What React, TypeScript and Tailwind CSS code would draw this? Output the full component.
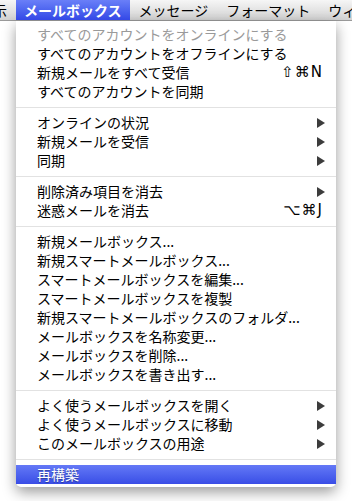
import React from 'react'

type Item =
  | { kind: 'sep' }
  | {
      kind: 'item'
      label: string
      shortcut?: string
      submenu?: boolean
      disabled?: boolean
      active?: boolean
    }

const ITEMS: Item[] = [
  { kind: 'item', label: 'すべてのアカウントをオンラインにする', disabled: true },
  { kind: 'item', label: 'すべてのアカウントをオフラインにする' },
  { kind: 'item', label: '新規メールをすべて受信', shortcut: '⇧⌘N' },
  { kind: 'item', label: 'すべてのアカウントを同期' },
  { kind: 'sep' },
  { kind: 'item', label: 'オンラインの状況', submenu: true },
  { kind: 'item', label: '新規メールを受信', submenu: true },
  { kind: 'item', label: '同期', submenu: true },
  { kind: 'sep' },
  { kind: 'item', label: '削除済み項目を消去', submenu: true },
  { kind: 'item', label: '迷惑メールを消去', shortcut: '⌥⌘J' },
  { kind: 'sep' },
  { kind: 'item', label: '新規メールボックス...' },
  { kind: 'item', label: '新規スマートメールボックス...' },
  { kind: 'item', label: 'スマートメールボックスを編集...' },
  { kind: 'item', label: 'スマートメールボックスを複製' },
  { kind: 'item', label: '新規スマートメールボックスのフォルダ...' },
  { kind: 'item', label: 'メールボックスを名称変更...' },
  { kind: 'item', label: 'メールボックスを削除...' },
  { kind: 'item', label: 'メールボックスを書き出す...' },
  { kind: 'sep' },
  { kind: 'item', label: 'よく使うメールボックスを開く', submenu: true },
  { kind: 'item', label: 'よく使うメールボックスに移動', submenu: true },
  { kind: 'item', label: 'このメールボックスの用途', submenu: true },
  { kind: 'sep' },
  { kind: 'item', label: '再構築', active: true },
]

const FONT = "font-['Hiragino_Kaku_Gothic_ProN','Noto_Sans_CJK_JP',sans-serif]"

/** サブメニューの▶ */
function SubmenuArrow() {
  return (
    <svg width="8" height="10" viewBox="0 0 8 10" className="flex-none">
      <polygon points="0,0 8,5 0,10" fill="#3c3c3c" />
    </svg>
  )
}

function MenuBar() {
  const tabs = ['表示', 'メールボックス', 'メッセージ', 'フォーマット', 'ウィンドウ']
  return (
    <div className="flex h-[21px] overflow-hidden whitespace-nowrap border-b border-[#9a9a9a] bg-gradient-to-b from-[#f6f6f6] to-[#d2d2d2]">
      {tabs.map((t, i) => (
        <div
          key={t}
          className={
            i === 0
              ? 'ml-[-30px] flex-none px-[9px] text-[14px] leading-[20px] text-black'
              : i === 1
                ? 'flex-none bg-gradient-to-b from-[#6a7ff8] to-[#3447e6] px-[8px] text-[14px] font-bold leading-[20px] text-white'
                : 'flex-none px-[9px] text-[14px] leading-[20px] text-black'
          }
        >
          {t}
        </div>
      ))}
    </div>
  )
}

export default function App() {
  return (
    <div className={`h-[501px] w-[352px] overflow-hidden bg-white ${FONT}`}>
      <MenuBar />
      <div className="ml-[16px] w-[320px] rounded-b-[5px] bg-white pb-[3px] pt-[4px] shadow-[0_5px_14px_rgba(0,0,0,0.4)]">
        {ITEMS.map((it, i) =>
          it.kind === 'sep' ? (
            <div key={i} className="flex h-[12px] items-center">
              <div className="h-px w-full bg-[#e2e2e2]" />
            </div>
          ) : (
            <div
              key={i}
              className={
                it.active
                  ? 'flex h-[19px] items-center justify-between bg-gradient-to-b from-[#6478f6] to-[#3a4de6] pl-[21px] pr-[11px] text-[14px] text-white [text-shadow:0_1px_1px_rgba(0,0,0,0.35)]'
                  : it.disabled
                    ? 'flex h-[19px] items-center justify-between pl-[21px] pr-[11px] text-[14px] text-[#9a9a9a]'
                    : 'flex h-[19px] items-center justify-between pl-[21px] pr-[11px] text-[14px] text-black'
              }
            >
              <span className="whitespace-nowrap">{it.label}</span>
              {it.shortcut && (
                <span className="pr-[2px] font-['DejaVu_Sans','Noto_Sans_CJK_JP',sans-serif] text-[15px] font-medium leading-[19px] tracking-[1px]">
                  {it.shortcut}
                </span>
              )}
              {it.submenu && <SubmenuArrow />}
            </div>
          ),
        )}
      </div>
    </div>
  )
}
